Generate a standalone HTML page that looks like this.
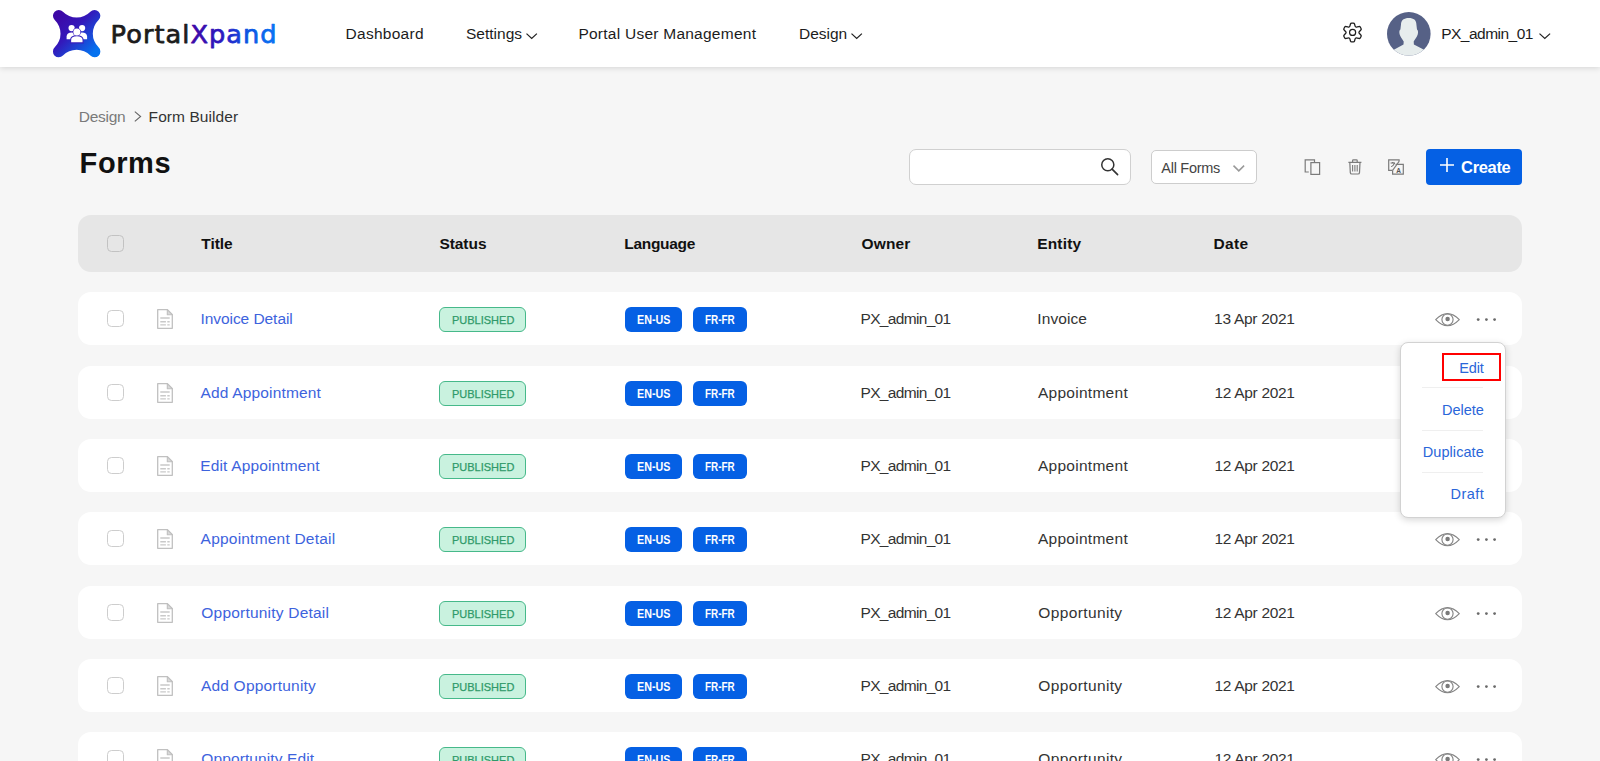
<!DOCTYPE html>
<html lang="en">
<head>
<meta charset="utf-8">
<title>Forms - PortalXpand</title>
<style>
*{box-sizing:border-box;margin:0;padding:0}
html,body{width:1600px;height:761px;overflow:hidden}
body{background:#f6f6f6;font-family:"Liberation Sans","DejaVu Sans",sans-serif;color:#333;font-size:15px;position:relative}
.tx{position:absolute;white-space:nowrap;line-height:1.2}
.pb{-webkit-text-stroke:0.25px #2f9a6a}
.abs{position:absolute}
svg{display:block;overflow:visible}
#hdr{position:absolute;left:0;top:0;width:1600px;height:67px;background:#fff;box-shadow:0 1px 6px rgba(0,0,0,.14)}
#search{position:absolute;left:909px;top:149px;width:222px;height:36px;background:#fff;border:1px solid #d0d0d0;border-radius:7px}
#filter{position:absolute;left:1151px;top:150px;width:106px;height:34px;background:#fff;border:1px solid #cdcdcd;border-radius:5px}
#create{position:absolute;left:1426px;top:149px;width:96px;height:36px;background:#0560e4;border-radius:4px}
#thead{position:absolute;left:78px;top:215px;width:1444px;height:57px;background:#e6e6e6;border-radius:13px}
.row{position:absolute;left:78px;width:1444px;height:53px;background:#fff;border-radius:13px}
.cb{position:absolute;left:29px;top:18px;width:17px;height:17px;border:1px solid #cdcdcd;border-radius:4.5px;background:#fff}
#thead .cb{background:#e6e6e6;top:20px;border-color:#c2c2c2}
.pub{position:absolute;left:361px;top:15px;width:87px;height:25px;border:1px solid #46b98a;border-radius:6px;background:#c9f2df}
.lg{position:absolute;top:15px;height:25px;border-radius:6px;background:#0560e4}
.lg1{left:547px;width:57px}.lg2{left:615px;width:54px}
.doc{position:absolute;left:79px;top:17px}
.eye{position:absolute;left:1357px;top:21px}
.dots{position:absolute;left:1398px;top:25px}
#menu{position:absolute;left:1400px;top:342px;width:106px;height:176px;background:#fff;border:1px solid #d2d2d2;border-radius:8px;box-shadow:0 2px 7px rgba(0,0,0,.16)}
#menu .sep{position:absolute;left:21px;width:61px;height:1px;background:#efefef}
#hl{position:absolute;left:1442px;top:353px;width:59px;height:28px;border:2px solid #f00}
</style>
</head>
<body>
<div id="hdr">
<svg class="abs" style="left:52.9px;top:9.9px" width="47.3" height="47.3" viewBox="0 0 47.3 47.3">
    <defs><linearGradient id="lgrad" x1="0.1" y1="0.15" x2="0.85" y2="0.9"><stop offset="0" stop-color="#3d08a6"/><stop offset="0.4" stop-color="#3318ba"/><stop offset="1" stop-color="#0572ef"/></linearGradient></defs>
    <path d="M9.94 1.74 A19.19 19.19 0 0 0 37.36 1.74 A5.8 5.8 0 1 1 45.56 9.94 A19.19 19.19 0 0 0 45.56 37.36 A5.8 5.8 0 1 1 37.36 45.56 A19.19 19.19 0 0 0 9.94 45.56 A5.8 5.8 0 1 1 1.74 37.36 A19.19 19.19 0 0 0 1.74 9.94 A5.8 5.8 0 1 1 9.94 1.74 Z" fill="url(#lgrad)"/>
    <g fill="#fff">
      <circle cx="18.6" cy="18.1" r="3.1"/><circle cx="29.1" cy="18.1" r="3.1"/>
      <path d="M13.6 29.2 V26.5 C13.6 23.8 15.7 22.4 18.7 22.4 C21.6 22.4 23.6 23.8 23.6 26.5 V29.2 Z"/>
      <path d="M24 29.2 V26.5 C24 23.8 26 22.4 29 22.4 C32 22.4 34.1 23.8 34.1 26.5 V29.2 Z"/>
      <circle cx="23.85" cy="22" r="3.6" stroke="#3a1ab8" stroke-width="1.1"/>
      <path d="M17.6 32.9 V30 C17.6 27.2 20.1 25.8 23.85 25.8 C27.6 25.8 30.1 27.2 30.1 30 V32.9 Z" stroke="#3420bc" stroke-width="1.1"/>
      <circle cx="23.85" cy="22" r="3.5"/>
    </g>
  </svg>
<svg class="abs" style="left:104px;top:10px" width="184" height="46" viewBox="0 0 184 46">
  <defs><linearGradient id="bgrad" gradientUnits="userSpaceOnUse" x1="88" y1="0" x2="172" y2="0"><stop offset="0" stop-color="#3d08a6"/><stop offset="0.4" stop-color="#2a1cc4"/><stop offset="0.62" stop-color="#0f4fe0"/><stop offset="1" stop-color="#0a74f4"/></linearGradient></defs>
  <text x="6.6" y="32.8" font-family="DejaVu Sans, Liberation Sans, sans-serif" font-size="25.6" textLength="166" lengthAdjust="spacing" stroke-width="0.75" stroke-linejoin="round"><tspan fill="#1c1c1c" stroke="#1c1c1c">Portal</tspan><tspan fill="url(#bgrad)" stroke="url(#bgrad)">Xpand</tspan></text>
</svg>
<div class="tx" style="left:345.60px;top:25px;font-size:15.5px;color:#1c1c1c;letter-spacing:0.26px;">Dashboard</div>
<div class="tx" style="left:466.00px;top:25px;font-size:15.5px;color:#1c1c1c;letter-spacing:0.01px;">Settings</div>
<svg class="abs" style="left:526.2px;top:32.7px" width="11.4" height="6.2" viewBox="0 0 11.4 6.2"><path d="M0.5 0.6 L5.7 5.5 L10.9 0.6" fill="none" stroke="#222" stroke-width="1.25"/></svg>
<div class="tx" style="left:578.40px;top:25px;font-size:15.5px;color:#1c1c1c;letter-spacing:0.25px;">Portal User Management</div>
<div class="tx" style="left:799.00px;top:25px;font-size:15.5px;color:#1c1c1c;letter-spacing:-0.01px;">Design</div>
<svg class="abs" style="left:850.7px;top:32.7px" width="11.4" height="6.2" viewBox="0 0 11.4 6.2"><path d="M0.5 0.6 L5.7 5.5 L10.9 0.6" fill="none" stroke="#222" stroke-width="1.25"/></svg>
<svg class="abs" style="left:1342.2px;top:22px" width="21" height="21" viewBox="0 0 21 21"><path d="M7.48 4.77 Q7.75 4.61 8.03 3.62 L8.47 2.05 Q8.75 1.06 9.73 1.06 L11.27 1.06 Q12.25 1.06 12.53 2.05 L12.97 3.62 Q13.25 4.61 13.52 4.77 L13.95 5.02 Q14.23 5.18 15.23 4.92 L16.80 4.52 Q17.80 4.27 18.29 5.11 L19.06 6.45 Q19.55 7.30 18.83 8.03 L17.70 9.19 Q16.98 9.93 16.98 10.25 L16.98 10.75 Q16.98 11.07 17.70 11.81 L18.83 12.97 Q19.55 13.70 19.06 14.55 L18.29 15.89 Q17.80 16.73 16.80 16.48 L15.23 16.08 Q14.23 15.82 13.95 15.98 L13.52 16.23 Q13.25 16.39 12.97 17.38 L12.53 18.95 Q12.25 19.94 11.27 19.94 L9.73 19.94 Q8.75 19.94 8.47 18.95 L8.03 17.38 Q7.75 16.39 7.48 16.23 L7.05 15.98 Q6.77 15.82 5.77 16.08 L4.20 16.48 Q3.20 16.73 2.71 15.89 L1.94 14.55 Q1.45 13.70 2.17 12.97 L3.30 11.81 Q4.02 11.07 4.02 10.75 L4.02 10.25 Q4.02 9.93 3.30 9.19 L2.17 8.03 Q1.45 7.30 1.94 6.45 L2.71 5.11 Q3.20 4.27 4.20 4.52 L5.77 4.92 Q6.77 5.18 7.05 5.02 Z" fill="none" stroke="#1e1e1e" stroke-width="1.3" stroke-linejoin="round"/><circle cx="10.6" cy="10.4" r="3.05" fill="none" stroke="#1e1e1e" stroke-width="1.2"/></svg>
<svg class="abs" style="left:1387px;top:12px" width="43.6" height="43.6" viewBox="0 0 43.6 43.6"><defs><clipPath id="avc"><circle cx="21.8" cy="21.8" r="21.8"/></clipPath></defs><circle cx="21.8" cy="21.8" r="21.8" fill="#566186"/><path clip-path="url(#avc)" d="M21.8 5.9 C17 5.9 14 8 14 12.4 L13.4 17.4 C12.2 18 12.1 20.2 12.7 22.6 C13.2 24.4 15 27 16.7 29.6 L16.5 32.4 L5 38.8 V44 H39 V38.8 L26.9 32.4 L26.7 29.6 C28.4 27 30.2 24.4 30.7 22.6 C31.3 20.2 31.2 18 30 17.4 L29.4 12.4 C29.4 8 26.6 5.9 21.8 5.9 Z" fill="#e7eded"/></svg>
<div class="tx" style="left:1441.20px;top:25px;font-size:15.5px;color:#1c1c1c;letter-spacing:-0.52px;">PX_admin_01</div>
<svg class="abs" style="left:1538.6px;top:33.2px" width="11.6" height="6.2" viewBox="0 0 11.6 6.2"><path d="M0.5 0.6 L5.8 5.5 L11.1 0.6" fill="none" stroke="#222" stroke-width="1.25"/></svg>
</div>
<div class="tx" style="left:78.75px;top:108px;font-size:15.5px;color:#7a7a7a;letter-spacing:-0.28px;">Design</div>
<svg class="abs" style="left:134.3px;top:110.8px" width="8" height="11" viewBox="0 0 8 11"><path d="M0.8 0.6 L6.6 5.5 L0.8 10.4" fill="none" stroke="#666" stroke-width="1.1"/></svg>
<div class="tx" style="left:148.60px;top:108px;font-size:15.5px;color:#333;letter-spacing:0.07px;">Form Builder</div>
<h1 class="tx" style="left:79.60px;top:146px;font-size:29px;font-weight:700;color:#111;letter-spacing:0.58px;">Forms</h1>
<div id="search"><svg class="abs" style="left:190px;top:7px" width="20" height="20" viewBox="0 0 20 20"><circle cx="7.8" cy="7.8" r="6.05" fill="none" stroke="#333" stroke-width="1.5"/><path d="M12.1 12.1 L17.6 17.6" stroke="#333" stroke-width="1.6" stroke-linecap="round"/></svg></div>
<div id="filter"><div class="tx" style="left:9.30px;top:9px;font-size:14.5px;color:#444;letter-spacing:-0.28px;">All Forms</div><svg class="abs" style="left:81.4px;top:14.2px" width="11.6" height="6.6" viewBox="0 0 11.6 6.6"><path d="M0.5 0.6 L5.8 5.9 L11.1 0.6" fill="none" stroke="#999" stroke-width="1.5"/></svg></div>
<svg class="abs" style="left:1303px;top:158px" width="19" height="19" viewBox="0 0 19 19"><path d="M11.5 4 V1.9 H2.2 V14 H5.8" fill="none" stroke="#7b7b7b" stroke-width="1.2"/><rect x="7.9" y="4.6" width="8.7" height="11.8" fill="none" stroke="#7b7b7b" stroke-width="1.2"/></svg>
<svg class="abs" style="left:1347px;top:158px" width="16" height="18" viewBox="0 0 16 18"><path d="M1.4 4.3 H14.4 M5.6 4.3 V2.6 Q5.6 1.8 6.4 1.8 H9.4 Q10.2 1.8 10.2 2.6 V4.3 M2.8 4.3 L3.3 14.6 Q3.4 16 4.8 16 H11 Q12.4 16 12.5 14.6 L13 4.3" fill="none" stroke="#7b7b7b" stroke-width="1.2" stroke-linejoin="round"/><path d="M5.6 7 V13.5 M7.9 7 V13.5 M10.2 7 V13.5" stroke="#7b7b7b" stroke-width="1.1"/></svg>
<svg class="abs" style="left:1387px;top:158px" width="18" height="18" viewBox="0 0 18 18"><path d="M12.1 3.4 V1.9 H1.7 V12.4 H5.6" fill="none" stroke="#7b7b7b" stroke-width="1.2"/><path d="M12.1 3.4 L5.6 12.4" stroke="#7b7b7b" stroke-width="1.1"/><path d="M8.6 6.3 H16.3 V16.2 H5.6 V12.4" fill="none" stroke="#7b7b7b" stroke-width="1.2"/><path d="M3.6 5 H8 M5.8 4 V5 M4.2 8.6 Q7 8 7.4 5" fill="none" stroke="#555" stroke-width="0.9"/><text x="9.3" y="14.6" font-family="Liberation Sans, sans-serif" font-size="6.5" font-weight="700" fill="#555">A</text></svg>
<div id="create"><svg class="abs" style="left:14px;top:9px" width="14" height="14" viewBox="0 0 14 14"><path d="M7 0 V14 M0 7 H14" stroke="#fff" stroke-width="1.6"/></svg><div class="tx" style="left:35.10px;top:9px;font-size:16.5px;font-weight:700;color:#fff;letter-spacing:-0.34px;">Create</div></div>
<div id="thead"><div class="cb"></div>
<div class="tx" style="left:123.25px;top:20px;font-size:15.5px;font-weight:700;color:#111;letter-spacing:-0.03px;">Title</div>
<div class="tx" style="left:361.40px;top:20px;font-size:15.5px;font-weight:700;color:#111;letter-spacing:-0.05px;">Status</div>
<div class="tx" style="left:546.30px;top:20px;font-size:15.5px;font-weight:700;color:#111;letter-spacing:-0.30px;">Language</div>
<div class="tx" style="left:783.60px;top:20px;font-size:15.5px;font-weight:700;color:#111;letter-spacing:0.12px;">Owner</div>
<div class="tx" style="left:959.20px;top:20px;font-size:15.5px;font-weight:700;color:#111;letter-spacing:0.17px;">Entity</div>
<div class="tx" style="left:1135.40px;top:20px;font-size:15.5px;font-weight:700;color:#111;letter-spacing:0.41px;">Date</div>
</div>
<div class="row" style="top:292px"><div class="cb"></div>
<svg class="doc" width="16" height="20" viewBox="0 0 16 20"><path d="M0.7 0.7 H10.3 L15.3 5.7 V19.3 H0.7 Z" fill="#fff" stroke="#c0c0c0" stroke-width="1.3" stroke-linejoin="round"/><path d="M10.3 0.7 V5.7 H15.3 Z" fill="#d9d9d9" stroke="#c0c0c0" stroke-width="1.1" stroke-linejoin="round"/><path d="M3.3 9 H12.7 M3.3 12.8 H8.9 M10.3 12.8 H12.7 M3.3 15.9 H8.9 M10.3 15.9 H12.7" stroke="#c9c9c9" stroke-width="1.4"/></svg>
<div class="tx" style="left:122.40px;top:18px;font-size:15.5px;color:#3d63dd;letter-spacing:-0.05px;">Invoice Detail</div>
<div class="pub"><div class="tx pb" style="left:11.50px;top:7px;font-size:11.5px;color:#2f9a6a;transform:translateY(-0.9px) scaleX(0.956);transform-origin:0 0;">PUBLISHED</div></div>
<div class="lg lg1"><div class="tx" style="left:11.70px;top:5px;font-size:13px;font-weight:700;color:#fff;transform:scaleX(0.824);transform-origin:0 0;">EN-US</div></div>
<div class="lg lg2"><div class="tx" style="left:11.80px;top:5px;font-size:13px;font-weight:700;color:#fff;transform:scaleX(0.763);transform-origin:0 0;">FR-FR</div></div>
<div class="tx" style="left:782.50px;top:18px;font-size:15.5px;color:#333;letter-spacing:-0.67px;">PX_admin_01</div>
<div class="tx" style="left:959.30px;top:18px;font-size:15.5px;color:#333;letter-spacing:0.08px;">Invoice</div>
<div class="tx" style="left:1136.10px;top:18px;font-size:15.5px;color:#333;letter-spacing:-0.28px;">13 Apr 2021</div>
<svg class="eye" width="25" height="14" viewBox="0 0 25 14"><path d="M0.7 6.6 C4.6 2.6 8.5 0.6 12.5 0.6 C16.5 0.6 20.4 2.6 24.3 6.6 C20.4 10.6 16.5 12.7 12.5 12.7 C8.5 12.7 4.6 10.6 0.7 6.6 Z" fill="none" stroke="#858585" stroke-width="1.15" stroke-linejoin="round"/><circle cx="12.5" cy="6.6" r="5.6" fill="none" stroke="#858585" stroke-width="1.15"/><circle cx="12.6" cy="6" r="2.25" fill="#7a7a7a"/></svg><svg class="dots" width="22" height="6" viewBox="0 0 22 6"><circle cx="2.2" cy="2.6" r="1.4" fill="#6a6a6a"/><circle cx="10.4" cy="2.6" r="1.4" fill="#6a6a6a"/><circle cx="18.6" cy="2.6" r="1.4" fill="#6a6a6a"/></svg>
</div>
<div class="row" style="top:366px"><div class="cb"></div>
<svg class="doc" width="16" height="20" viewBox="0 0 16 20"><path d="M0.7 0.7 H10.3 L15.3 5.7 V19.3 H0.7 Z" fill="#fff" stroke="#c0c0c0" stroke-width="1.3" stroke-linejoin="round"/><path d="M10.3 0.7 V5.7 H15.3 Z" fill="#d9d9d9" stroke="#c0c0c0" stroke-width="1.1" stroke-linejoin="round"/><path d="M3.3 9 H12.7 M3.3 12.8 H8.9 M10.3 12.8 H12.7 M3.3 15.9 H8.9 M10.3 15.9 H12.7" stroke="#c9c9c9" stroke-width="1.4"/></svg>
<div class="tx" style="left:122.60px;top:18px;font-size:15.5px;color:#3d63dd;letter-spacing:0.16px;">Add Appointment</div>
<div class="pub"><div class="tx pb" style="left:11.50px;top:7px;font-size:11.5px;color:#2f9a6a;transform:translateY(-0.9px) scaleX(0.956);transform-origin:0 0;">PUBLISHED</div></div>
<div class="lg lg1"><div class="tx" style="left:11.70px;top:5px;font-size:13px;font-weight:700;color:#fff;transform:scaleX(0.824);transform-origin:0 0;">EN-US</div></div>
<div class="lg lg2"><div class="tx" style="left:11.80px;top:5px;font-size:13px;font-weight:700;color:#fff;transform:scaleX(0.763);transform-origin:0 0;">FR-FR</div></div>
<div class="tx" style="left:782.50px;top:18px;font-size:15.5px;color:#333;letter-spacing:-0.67px;">PX_admin_01</div>
<div class="tx" style="left:959.90px;top:18px;font-size:15.5px;color:#333;letter-spacing:0.28px;">Appointment</div>
<div class="tx" style="left:1136.50px;top:18px;font-size:15.5px;color:#333;letter-spacing:-0.32px;">12 Apr 2021</div>
<svg class="eye" width="25" height="14" viewBox="0 0 25 14"><path d="M0.7 6.6 C4.6 2.6 8.5 0.6 12.5 0.6 C16.5 0.6 20.4 2.6 24.3 6.6 C20.4 10.6 16.5 12.7 12.5 12.7 C8.5 12.7 4.6 10.6 0.7 6.6 Z" fill="none" stroke="#858585" stroke-width="1.15" stroke-linejoin="round"/><circle cx="12.5" cy="6.6" r="5.6" fill="none" stroke="#858585" stroke-width="1.15"/><circle cx="12.6" cy="6" r="2.25" fill="#7a7a7a"/></svg><svg class="dots" width="22" height="6" viewBox="0 0 22 6"><circle cx="2.2" cy="2.6" r="1.4" fill="#6a6a6a"/><circle cx="10.4" cy="2.6" r="1.4" fill="#6a6a6a"/><circle cx="18.6" cy="2.6" r="1.4" fill="#6a6a6a"/></svg>
</div>
<div class="row" style="top:439px"><div class="cb"></div>
<svg class="doc" width="16" height="20" viewBox="0 0 16 20"><path d="M0.7 0.7 H10.3 L15.3 5.7 V19.3 H0.7 Z" fill="#fff" stroke="#c0c0c0" stroke-width="1.3" stroke-linejoin="round"/><path d="M10.3 0.7 V5.7 H15.3 Z" fill="#d9d9d9" stroke="#c0c0c0" stroke-width="1.1" stroke-linejoin="round"/><path d="M3.3 9 H12.7 M3.3 12.8 H8.9 M10.3 12.8 H12.7 M3.3 15.9 H8.9 M10.3 15.9 H12.7" stroke="#c9c9c9" stroke-width="1.4"/></svg>
<div class="tx" style="left:122.30px;top:18px;font-size:15.5px;color:#3d63dd;letter-spacing:0.14px;">Edit Appointment</div>
<div class="pub"><div class="tx pb" style="left:11.50px;top:7px;font-size:11.5px;color:#2f9a6a;transform:translateY(-0.9px) scaleX(0.956);transform-origin:0 0;">PUBLISHED</div></div>
<div class="lg lg1"><div class="tx" style="left:11.70px;top:5px;font-size:13px;font-weight:700;color:#fff;transform:scaleX(0.824);transform-origin:0 0;">EN-US</div></div>
<div class="lg lg2"><div class="tx" style="left:11.80px;top:5px;font-size:13px;font-weight:700;color:#fff;transform:scaleX(0.763);transform-origin:0 0;">FR-FR</div></div>
<div class="tx" style="left:782.50px;top:18px;font-size:15.5px;color:#333;letter-spacing:-0.67px;">PX_admin_01</div>
<div class="tx" style="left:959.90px;top:18px;font-size:15.5px;color:#333;letter-spacing:0.28px;">Appointment</div>
<div class="tx" style="left:1136.50px;top:18px;font-size:15.5px;color:#333;letter-spacing:-0.32px;">12 Apr 2021</div>
<svg class="eye" width="25" height="14" viewBox="0 0 25 14"><path d="M0.7 6.6 C4.6 2.6 8.5 0.6 12.5 0.6 C16.5 0.6 20.4 2.6 24.3 6.6 C20.4 10.6 16.5 12.7 12.5 12.7 C8.5 12.7 4.6 10.6 0.7 6.6 Z" fill="none" stroke="#858585" stroke-width="1.15" stroke-linejoin="round"/><circle cx="12.5" cy="6.6" r="5.6" fill="none" stroke="#858585" stroke-width="1.15"/><circle cx="12.6" cy="6" r="2.25" fill="#7a7a7a"/></svg><svg class="dots" width="22" height="6" viewBox="0 0 22 6"><circle cx="2.2" cy="2.6" r="1.4" fill="#6a6a6a"/><circle cx="10.4" cy="2.6" r="1.4" fill="#6a6a6a"/><circle cx="18.6" cy="2.6" r="1.4" fill="#6a6a6a"/></svg>
</div>
<div class="row" style="top:512px"><div class="cb"></div>
<svg class="doc" width="16" height="20" viewBox="0 0 16 20"><path d="M0.7 0.7 H10.3 L15.3 5.7 V19.3 H0.7 Z" fill="#fff" stroke="#c0c0c0" stroke-width="1.3" stroke-linejoin="round"/><path d="M10.3 0.7 V5.7 H15.3 Z" fill="#d9d9d9" stroke="#c0c0c0" stroke-width="1.1" stroke-linejoin="round"/><path d="M3.3 9 H12.7 M3.3 12.8 H8.9 M10.3 12.8 H12.7 M3.3 15.9 H8.9 M10.3 15.9 H12.7" stroke="#c9c9c9" stroke-width="1.4"/></svg>
<div class="tx" style="left:122.60px;top:18px;font-size:15.5px;color:#3d63dd;letter-spacing:0.21px;">Appointment Detail</div>
<div class="pub"><div class="tx pb" style="left:11.50px;top:7px;font-size:11.5px;color:#2f9a6a;transform:translateY(-0.9px) scaleX(0.956);transform-origin:0 0;">PUBLISHED</div></div>
<div class="lg lg1"><div class="tx" style="left:11.70px;top:5px;font-size:13px;font-weight:700;color:#fff;transform:scaleX(0.824);transform-origin:0 0;">EN-US</div></div>
<div class="lg lg2"><div class="tx" style="left:11.80px;top:5px;font-size:13px;font-weight:700;color:#fff;transform:scaleX(0.763);transform-origin:0 0;">FR-FR</div></div>
<div class="tx" style="left:782.50px;top:18px;font-size:15.5px;color:#333;letter-spacing:-0.67px;">PX_admin_01</div>
<div class="tx" style="left:959.90px;top:18px;font-size:15.5px;color:#333;letter-spacing:0.28px;">Appointment</div>
<div class="tx" style="left:1136.50px;top:18px;font-size:15.5px;color:#333;letter-spacing:-0.32px;">12 Apr 2021</div>
<svg class="eye" width="25" height="14" viewBox="0 0 25 14"><path d="M0.7 6.6 C4.6 2.6 8.5 0.6 12.5 0.6 C16.5 0.6 20.4 2.6 24.3 6.6 C20.4 10.6 16.5 12.7 12.5 12.7 C8.5 12.7 4.6 10.6 0.7 6.6 Z" fill="none" stroke="#858585" stroke-width="1.15" stroke-linejoin="round"/><circle cx="12.5" cy="6.6" r="5.6" fill="none" stroke="#858585" stroke-width="1.15"/><circle cx="12.6" cy="6" r="2.25" fill="#7a7a7a"/></svg><svg class="dots" width="22" height="6" viewBox="0 0 22 6"><circle cx="2.2" cy="2.6" r="1.4" fill="#6a6a6a"/><circle cx="10.4" cy="2.6" r="1.4" fill="#6a6a6a"/><circle cx="18.6" cy="2.6" r="1.4" fill="#6a6a6a"/></svg>
</div>
<div class="row" style="top:586px"><div class="cb"></div>
<svg class="doc" width="16" height="20" viewBox="0 0 16 20"><path d="M0.7 0.7 H10.3 L15.3 5.7 V19.3 H0.7 Z" fill="#fff" stroke="#c0c0c0" stroke-width="1.3" stroke-linejoin="round"/><path d="M10.3 0.7 V5.7 H15.3 Z" fill="#d9d9d9" stroke="#c0c0c0" stroke-width="1.1" stroke-linejoin="round"/><path d="M3.3 9 H12.7 M3.3 12.8 H8.9 M10.3 12.8 H12.7 M3.3 15.9 H8.9 M10.3 15.9 H12.7" stroke="#c9c9c9" stroke-width="1.4"/></svg>
<div class="tx" style="left:123.30px;top:18px;font-size:15.5px;color:#3d63dd;letter-spacing:0.21px;">Opportunity Detail</div>
<div class="pub"><div class="tx pb" style="left:11.50px;top:7px;font-size:11.5px;color:#2f9a6a;transform:translateY(-0.9px) scaleX(0.956);transform-origin:0 0;">PUBLISHED</div></div>
<div class="lg lg1"><div class="tx" style="left:11.70px;top:5px;font-size:13px;font-weight:700;color:#fff;transform:scaleX(0.824);transform-origin:0 0;">EN-US</div></div>
<div class="lg lg2"><div class="tx" style="left:11.80px;top:5px;font-size:13px;font-weight:700;color:#fff;transform:scaleX(0.763);transform-origin:0 0;">FR-FR</div></div>
<div class="tx" style="left:782.50px;top:18px;font-size:15.5px;color:#333;letter-spacing:-0.67px;">PX_admin_01</div>
<div class="tx" style="left:960.30px;top:18px;font-size:15.5px;color:#333;letter-spacing:0.37px;">Opportunity</div>
<div class="tx" style="left:1136.50px;top:18px;font-size:15.5px;color:#333;letter-spacing:-0.32px;">12 Apr 2021</div>
<svg class="eye" width="25" height="14" viewBox="0 0 25 14"><path d="M0.7 6.6 C4.6 2.6 8.5 0.6 12.5 0.6 C16.5 0.6 20.4 2.6 24.3 6.6 C20.4 10.6 16.5 12.7 12.5 12.7 C8.5 12.7 4.6 10.6 0.7 6.6 Z" fill="none" stroke="#858585" stroke-width="1.15" stroke-linejoin="round"/><circle cx="12.5" cy="6.6" r="5.6" fill="none" stroke="#858585" stroke-width="1.15"/><circle cx="12.6" cy="6" r="2.25" fill="#7a7a7a"/></svg><svg class="dots" width="22" height="6" viewBox="0 0 22 6"><circle cx="2.2" cy="2.6" r="1.4" fill="#6a6a6a"/><circle cx="10.4" cy="2.6" r="1.4" fill="#6a6a6a"/><circle cx="18.6" cy="2.6" r="1.4" fill="#6a6a6a"/></svg>
</div>
<div class="row" style="top:659px"><div class="cb"></div>
<svg class="doc" width="16" height="20" viewBox="0 0 16 20"><path d="M0.7 0.7 H10.3 L15.3 5.7 V19.3 H0.7 Z" fill="#fff" stroke="#c0c0c0" stroke-width="1.3" stroke-linejoin="round"/><path d="M10.3 0.7 V5.7 H15.3 Z" fill="#d9d9d9" stroke="#c0c0c0" stroke-width="1.1" stroke-linejoin="round"/><path d="M3.3 9 H12.7 M3.3 12.8 H8.9 M10.3 12.8 H12.7 M3.3 15.9 H8.9 M10.3 15.9 H12.7" stroke="#c9c9c9" stroke-width="1.4"/></svg>
<div class="tx" style="left:122.90px;top:18px;font-size:15.5px;color:#3d63dd;letter-spacing:0.21px;">Add Opportunity</div>
<div class="pub"><div class="tx pb" style="left:11.50px;top:7px;font-size:11.5px;color:#2f9a6a;transform:translateY(-0.9px) scaleX(0.956);transform-origin:0 0;">PUBLISHED</div></div>
<div class="lg lg1"><div class="tx" style="left:11.70px;top:5px;font-size:13px;font-weight:700;color:#fff;transform:scaleX(0.824);transform-origin:0 0;">EN-US</div></div>
<div class="lg lg2"><div class="tx" style="left:11.80px;top:5px;font-size:13px;font-weight:700;color:#fff;transform:scaleX(0.763);transform-origin:0 0;">FR-FR</div></div>
<div class="tx" style="left:782.50px;top:18px;font-size:15.5px;color:#333;letter-spacing:-0.67px;">PX_admin_01</div>
<div class="tx" style="left:960.30px;top:18px;font-size:15.5px;color:#333;letter-spacing:0.37px;">Opportunity</div>
<div class="tx" style="left:1136.50px;top:18px;font-size:15.5px;color:#333;letter-spacing:-0.32px;">12 Apr 2021</div>
<svg class="eye" width="25" height="14" viewBox="0 0 25 14"><path d="M0.7 6.6 C4.6 2.6 8.5 0.6 12.5 0.6 C16.5 0.6 20.4 2.6 24.3 6.6 C20.4 10.6 16.5 12.7 12.5 12.7 C8.5 12.7 4.6 10.6 0.7 6.6 Z" fill="none" stroke="#858585" stroke-width="1.15" stroke-linejoin="round"/><circle cx="12.5" cy="6.6" r="5.6" fill="none" stroke="#858585" stroke-width="1.15"/><circle cx="12.6" cy="6" r="2.25" fill="#7a7a7a"/></svg><svg class="dots" width="22" height="6" viewBox="0 0 22 6"><circle cx="2.2" cy="2.6" r="1.4" fill="#6a6a6a"/><circle cx="10.4" cy="2.6" r="1.4" fill="#6a6a6a"/><circle cx="18.6" cy="2.6" r="1.4" fill="#6a6a6a"/></svg>
</div>
<div class="row" style="top:732px"><div class="cb"></div>
<svg class="doc" width="16" height="20" viewBox="0 0 16 20"><path d="M0.7 0.7 H10.3 L15.3 5.7 V19.3 H0.7 Z" fill="#fff" stroke="#c0c0c0" stroke-width="1.3" stroke-linejoin="round"/><path d="M10.3 0.7 V5.7 H15.3 Z" fill="#d9d9d9" stroke="#c0c0c0" stroke-width="1.1" stroke-linejoin="round"/><path d="M3.3 9 H12.7 M3.3 12.8 H8.9 M10.3 12.8 H12.7 M3.3 15.9 H8.9 M10.3 15.9 H12.7" stroke="#c9c9c9" stroke-width="1.4"/></svg>
<div class="tx" style="left:123.30px;top:18px;font-size:15.5px;color:#3d63dd;letter-spacing:0.11px;">Opportunity Edit</div>
<div class="pub"><div class="tx pb" style="left:11.50px;top:7px;font-size:11.5px;color:#2f9a6a;transform:translateY(-0.9px) scaleX(0.956);transform-origin:0 0;">PUBLISHED</div></div>
<div class="lg lg1"><div class="tx" style="left:11.70px;top:5px;font-size:13px;font-weight:700;color:#fff;transform:scaleX(0.824);transform-origin:0 0;">EN-US</div></div>
<div class="lg lg2"><div class="tx" style="left:11.80px;top:5px;font-size:13px;font-weight:700;color:#fff;transform:scaleX(0.763);transform-origin:0 0;">FR-FR</div></div>
<div class="tx" style="left:782.50px;top:18px;font-size:15.5px;color:#333;letter-spacing:-0.67px;">PX_admin_01</div>
<div class="tx" style="left:960.30px;top:18px;font-size:15.5px;color:#333;letter-spacing:0.37px;">Opportunity</div>
<div class="tx" style="left:1136.50px;top:18px;font-size:15.5px;color:#333;letter-spacing:-0.32px;">12 Apr 2021</div>
<svg class="eye" width="25" height="14" viewBox="0 0 25 14"><path d="M0.7 6.6 C4.6 2.6 8.5 0.6 12.5 0.6 C16.5 0.6 20.4 2.6 24.3 6.6 C20.4 10.6 16.5 12.7 12.5 12.7 C8.5 12.7 4.6 10.6 0.7 6.6 Z" fill="none" stroke="#858585" stroke-width="1.15" stroke-linejoin="round"/><circle cx="12.5" cy="6.6" r="5.6" fill="none" stroke="#858585" stroke-width="1.15"/><circle cx="12.6" cy="6" r="2.25" fill="#7a7a7a"/></svg><svg class="dots" width="22" height="6" viewBox="0 0 22 6"><circle cx="2.2" cy="2.6" r="1.4" fill="#6a6a6a"/><circle cx="10.4" cy="2.6" r="1.4" fill="#6a6a6a"/><circle cx="18.6" cy="2.6" r="1.4" fill="#6a6a6a"/></svg>
</div>
<div id="menu">
<div class="tx" style="left:58.30px;top:17px;font-size:14.5px;color:#2a66d9;letter-spacing:-0.19px;">Edit</div>
<div class="sep" style="top:44px"></div>
<div class="tx" style="left:41.00px;top:59px;font-size:14.5px;color:#2a66d9;letter-spacing:-0.03px;">Delete</div>
<div class="sep" style="top:87px"></div>
<div class="tx" style="left:21.70px;top:101px;font-size:14.5px;color:#2a66d9;letter-spacing:0.08px;">Duplicate</div>
<div class="sep" style="top:129px"></div>
<div class="tx" style="left:49.60px;top:143px;font-size:14.5px;color:#2a66d9;letter-spacing:0.43px;">Draft</div>
</div>
<div id="hl"></div>
</body>
</html>
